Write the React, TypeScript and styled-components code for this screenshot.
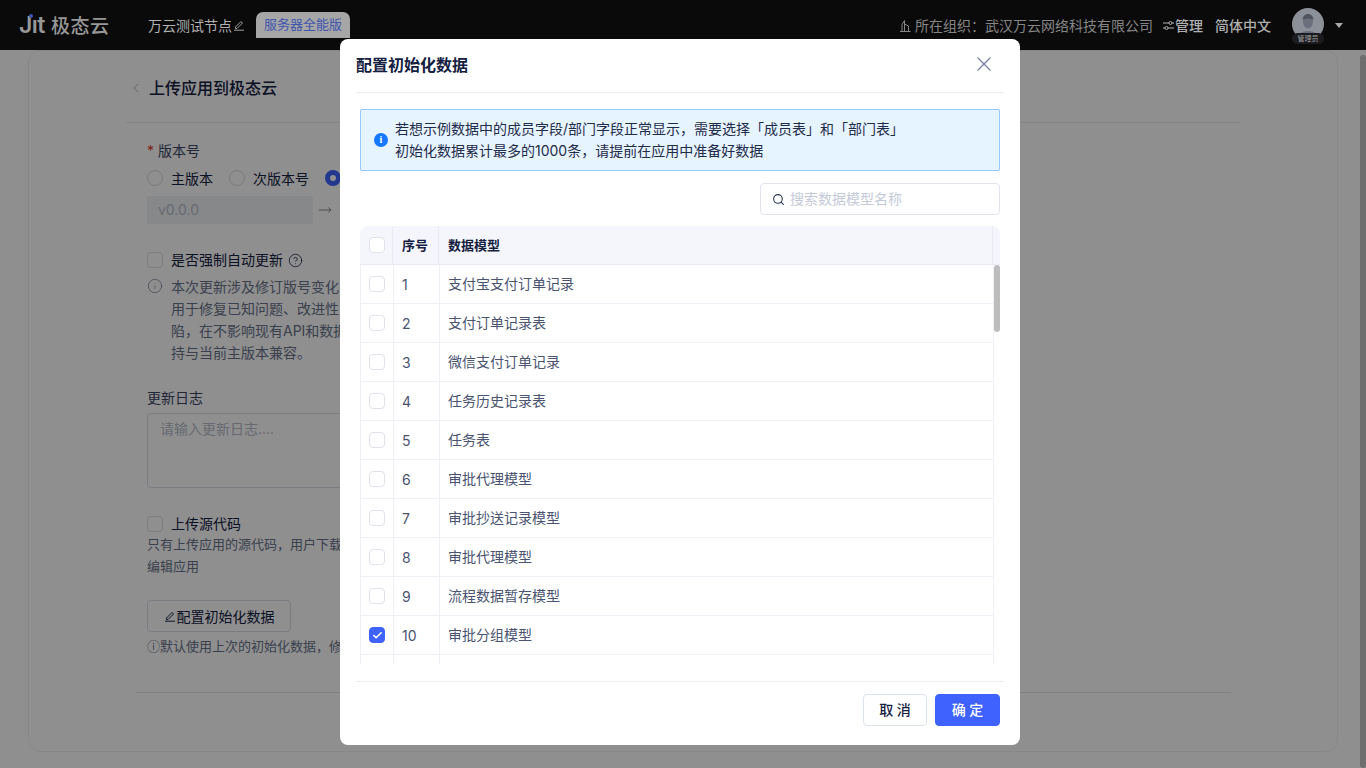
import React, {FC} from 'react';
import styled, {createGlobalStyle} from 'styled-components';
import {ChevronLeft, X, Search, Info, MoveRight, CircleHelp, Check} from 'lucide-react';

const GlobalStyle = createGlobalStyle`
  html, body {
    margin: 0;
    height: 768px;
    overflow: hidden;
    background: #fff;
    font-family: Inter, "Noto Sans CJK SC", sans-serif;
    color: #14203f;
  }
  * { box-sizing: border-box; }
`;

const rows = [
  '支付宝支付订单记录',
  '支付订单记录表',
  '微信支付订单记录',
  '任务历史记录表',
  '任务表',
  '审批代理模型',
  '审批抄送记录模型',
  '审批代理模型',
  '流程数据暂存模型',
  '审批分组模型',
];

const Page = styled.div`
  height: 768px;
  display: flex;
  flex-direction: column;
`;

// the top bar stays above the mask, its colours are already the dimmed ones
const TopBar = styled.header`
  position: relative;
  z-index: 2;
  height: 50px;
  flex: none;
  background: #0a0a0a;
  display: flex;
  align-items: center;
  padding: 0 23px 0 19px;
  color: #b0b0b0;
`;

const Logo = styled.div`
  display: flex;
  align-items: center;
  gap: 6px;
  width: 129px;
  color: #979797;
`;

const LogoMark = styled.span`
  position: relative;
  font: 600 23px/1 Inter, sans-serif;
  letter-spacing: -0.5px;
`;

const LogoDot = styled.i`
  position: absolute;
  left: 10px;
  top: 0;
  width: 4px;
  height: 4px;
  border-radius: 50%;
  background: #3f55b0;
`;

const LogoName = styled.span`
  font-size: 19px;
  font-weight: 500;
  letter-spacing: 0.5px;
  padding-bottom: 2px;
`;

const NodeName = styled.span`
  font-size: 14px;
  display: flex;
  align-items: center;
  gap: 1px;
  color: #b0b0b0;
`;

const EditionTag = styled.span`
  margin-left: 11px;
  margin-top: 0;
  height: 26px;
  padding: 0 8px;
  border-radius: 7px 7px 0 0;
  background: #a6a6a6;
  color: #3f55b0;
  font-size: 13px;
  line-height: 25px;
`;

const TopRight = styled.div`
  margin-left: auto;
  display: flex;
  align-items: center;
`;

const OrgText = styled.span`
  display: flex;
  align-items: center;
  gap: 3px;
  font-size: 14px;
  color: #858585;
`;

const ManageLink = styled.span`
  display: flex;
  align-items: center;
  gap: 1px;
  margin-left: 10px;
  font-size: 14px;
  font-weight: 500;
`;

const LangLink = styled.span`
  margin-left: 12px;
  font-size: 14px;
  font-weight: 500;
`;

const AvatarBox = styled.div`
  position: relative;
  width: 32px;
  height: 32px;
  margin: 0 0 2px 21px;
  border-radius: 50%;
  background: #8c9098;
`;

const AvatarBadge = styled.span`
  position: absolute;
  left: 0;
  bottom: -4px;
  width: 32px;
  height: 11px;
  border-radius: 6px;
  background: #1b1c20;
  color: #a0a0a0;
  font-size: 7px;
  line-height: 11px;
  text-align: center;
`;

const Caret = styled.span`
  margin-left: 11px;
  width: 0;
  height: 0;
  border: 4.5px solid transparent;
  border-top: 5px solid #a8a8a8;
  border-bottom: 0;
`;

const PageThumb = styled.div`
  position: fixed;
  z-index: 2;
  right: 0;
  top: 55px;
  bottom: 0;
  width: 6px;
  border-radius: 3px;
  background: #6e6e6e;
`;

const Body = styled.main`
  flex: 1;
  min-height: 0;
  padding: 0 28px 16px;
`;

const Sheet = styled.section`
  height: 100%;
  border: 1px solid #eef0f4;
  border-radius: 12px;
  padding: 0 97px;
`;

const Heading = styled.div`
  height: 72px;
  display: flex;
  align-items: center;
  gap: 5px;
  padding-left: 2px;
  border-bottom: 1px solid #e9ebf0;
  font-size: 16px;
  font-weight: 500;
  color: #14203f;
  svg { color: #b4bac6; margin-top: 2px; }
`;

const Form = styled.div`
  margin: 0 9px 0 10px;
  padding-left: 11px;
  height: 570px;
  border-bottom: 1px solid #e4e7ee;
  font-size: 14px;
`;

const FieldLabel = styled.div`
  padding-top: 20px;
  line-height: 16px;
  color: #3b4663;
  span { color: #e0362c; margin-right: 4px; }
`;

const RadioRow = styled.div`
  display: flex;
  gap: 16px;
  margin-top: 9px;
  height: 20px;
`;

const RadioItem = styled.label`
  display: flex;
  align-items: center;
  gap: 8px;
`;

const RadioDot = styled.i<{$on?: boolean}>`
  width: 16px;
  height: 16px;
  border-radius: 50%;
  background: #fff;
  border: ${p => (p.$on ? '5px solid #3f62ff' : '1px solid #d5d9e2')};
`;

const VersionRow = styled.div`
  display: flex;
  align-items: center;
  gap: 5px;
  margin-top: 8px;
  svg { color: #667; }
`;

const VersionInput = styled.div`
  width: 166px;
  height: 28px;
  padding: 0 11px;
  background: #f0f2f5;
  border-radius: 3px;
  color: #b8bdc9;
  line-height: 28px;
`;

const CheckRow = styled.div`
  display: flex;
  align-items: center;
  gap: 8px;
  margin-top: 26px;
  line-height: 20px;
  svg { margin-left: -3px; color: #14203f; }
`;

const Box = styled.i`
  flex: none;
  width: 16px;
  height: 16px;
  border: 1px solid #dcdfe8;
  border-radius: 4px;
  background: #fff;
`;

const NoteRow = styled.div`
  display: flex;
  gap: 8px;
  margin-top: 6px;
  width: 190px;
  color: #69728a;
  line-height: 22px;
  svg { flex: none; margin-top: 2px; }
`;

const NoteText = styled.div`
  white-space: nowrap;
`;

const LogLabel = styled.div`
  margin-top: 25px;
  line-height: 18px;
  color: #3b4663;
`;

const LogBox = styled.div`
  margin-top: 6px;
  width: 520px;
  height: 75px;
  border: 1px solid #d9dde6;
  border-radius: 4px;
  padding: 6px 12px;
  color: #b8bdc9;
  line-height: 18px;
`;

const HelpText = styled.div<{$top: number}>`
  margin-top: ${p => p.$top}px;
  font-size: 13px;
  line-height: 21.5px;
  color: #69728a;
  white-space: nowrap;
`;

const OutlineButton = styled.div`
  margin-top: 23px;
  width: 144px;
  height: 32px;
  border: 1px solid #d9dde6;
  border-radius: 4px;
  display: flex;
  align-items: center;
  justify-content: center;
  gap: 1px;
  color: #14203f;
`;

const Overlay = styled.div`
  position: fixed;
  z-index: 1;
  inset: 0;
  background: rgba(0, 0, 0, 0.44);
`;

const Modal = styled.div`
  position: fixed;
  z-index: 3;
  left: 340px;
  top: 39px;
  width: 680px;
  height: 706px;
  background: #fff;
  border-radius: 8px;
  padding: 0 16px;
  display: flex;
  flex-direction: column;
  color: #14203f;
`;

const ModalHead = styled.div`
  height: 54px;
  flex: none;
  display: flex;
  align-items: center;
  justify-content: space-between;
  border-bottom: 1px solid #eceef3;
  padding-bottom: 3px;
  font-size: 16px;
  font-weight: 700;
  svg { color: #74809b; margin-right: 8px; }
`;

const Alert = styled.div`
  margin: 16px 4px 0;
  height: 62px;
  flex: none;
  display: flex;
  align-items: center;
  gap: 7px;
  padding-left: 13px;
  background: #e6f4ff;
  border: 1px solid #91caff;
  border-radius: 2px;
  font-size: 14px;
  line-height: 22px;
  color: #1f2b4a;
`;

const AlertText = styled.div`
  padding-bottom: 1px;
`;

const InfoDot = styled.span`
  width: 14px;
  height: 14px;
  flex: none;
  border-radius: 50%;
  background: #1677ff;
  color: #fff;
  display: flex;
  align-items: center;
  justify-content: center;
  font: 700 10px/1 "Liberation Serif", serif;
`;

const SearchRow = styled.div`
  display: flex;
  justify-content: flex-end;
  margin: 12px 4px 0;
  flex: none;
`;

const SearchBox = styled.div`
  width: 240px;
  height: 32px;
  border: 1px solid #e1e4ec;
  border-radius: 4px;
  display: flex;
  align-items: center;
  gap: 5px;
  padding: 0 0 2px 11px;
  font-size: 14px;
  color: #c5cad8;
  svg { color: #2a3655; margin-top: 2px; }
`;

const Table = styled.div`
  margin: 11px 4px 0;
  width: 640px;
  flex: none;
`;

const HeadRow = styled.div`
  height: 39px;
  display: grid;
  grid-template-columns: 33px 46px 1fr 7px;
  background: #f4f6fb;
  border-radius: 8px 8px 0 0;
  border-bottom: 1px solid #e8ebf2;
  font-size: 13px;
  font-weight: 600;
`;

const HeadCell = styled.div`
  display: flex;
  align-items: center;
  padding: 0 0 1px 9px;
  border-right: 1px solid #e8ebf2;
  &:first-child { padding: 0 0 0 9px; }
  &:last-child { border-right: 0; padding: 0; }
`;

const TableBody = styled.div`
  position: relative;
  height: 399px;
  overflow: hidden;
  padding-right: 6px;
`;

const ScrollThumb = styled.div`
  position: absolute;
  top: 0;
  right: 0;
  width: 6px;
  height: 67px;
  border-radius: 3px;
  background: #bdbdbd;
`;

const Row = styled.div`
  height: 39px;
  display: grid;
  grid-template-columns: 33px 46px 1fr;
  border: 1px solid #eef0f5;
  border-top: 0;
  font-size: 14px;
  color: #4a5470;
`;

const Cell = styled.div`
  display: flex;
  align-items: center;
  padding-left: 8px;
  border-right: 1px solid #eef0f5;
  &:last-child { border-right: 0; padding-bottom: 2px; }
`;

const RowBox = styled.span<{$on?: boolean}>`
  width: 16px;
  height: 16px;
  border-radius: 4px;
  border: 1px solid ${p => (p.$on ? '#3f62ff' : '#dfe2ea')};
  background: ${p => (p.$on ? '#3f62ff' : '#fff')};
  color: #fff;
  display: flex;
  align-items: center;
  justify-content: center;
`;

const ModalFoot = styled.div`
  margin-top: 17px;
  flex: none;
  border-top: 1px solid #eceef3;
  padding: 12px 4px 0 0;
  display: flex;
  justify-content: flex-end;
  gap: 8px;
`;

const FootButton = styled.button<{$primary?: boolean}>`
  height: 32px;
  width: ${p => (p.$primary ? 65 : 64)}px;
  border-radius: 4px;
  border: 1px solid ${p => (p.$primary ? '#3f62ff' : '#dde3ee')};
  background: ${p => (p.$primary ? '#3f62ff' : '#fff')};
  color: ${p => (p.$primary ? '#fff' : '#14203f')};
  font: 500 14px Inter, "Noto Sans CJK SC", sans-serif;
  white-space: pre;
  padding: 0 0 2px;
`;

const Avatar: FC = () => (
  <svg width="32" height="32" viewBox="0 0 32 32">
    <clipPath id="avatar-clip"><circle cx="16" cy="16" r="16" /></clipPath>
    <g clipPath="url(#avatar-clip)" fill="#6b707c">
      <ellipse cx="16" cy="14" rx="5" ry="6.500" />
      <path d="M5 32c0-6 5-9 11-9s11 3 11 9z" />
      <path d="M10.500 12c0-4 3-6 5.500-6s5.500 2 5.500 6c-2-2-9-2-11 0z" fill="#4f535d" />
    </g>
  </svg>
);

const OrgIcon: FC = () => (
  <svg width="14" height="14" viewBox="0 0 14 14" fill="none" stroke="#858585" strokeWidth="1">
    <path d="M2 13.500h10.500M4 13.500V6.500L6.500 2.500V13.500M6.500 6 10.500 8v5.500" />
  </svg>
);

const ManageIcon: FC = () => (
  <svg width="11" height="11" viewBox="0 0 11 11" fill="none" stroke="#b0b0b0" strokeWidth="1">
    <path d="M0 3h6M9 3h2M0 8h2M5 8h6" />
    <circle cx="7.500" cy="3" r="1.500" />
    <circle cx="3.500" cy="8" r="1.500" />
  </svg>
);

const EditIcon: FC<{size: number; color: string}> = ({size, color}) => (
  <svg width={size} height={size} viewBox="0 0 12 12" fill="none" stroke={color} strokeWidth="1">
    <path d="M2.500 8 8 2.500l1.500 1.500L4 9.500H2.500z" />
    <path d="M1 11.200h10" />
  </svg>
);

const App: FC = () => (
  <Page>
    <GlobalStyle />
    <TopBar>
      <Logo>
        <LogoMark>Jıt<LogoDot /></LogoMark>
        <LogoName>极态云</LogoName>
      </Logo>
      <NodeName>万云测试节点<EditIcon size={12} color="#a0a0a0" /></NodeName>
      <EditionTag>服务器全能版</EditionTag>
      <TopRight>
        <OrgText><OrgIcon />所在组织：武汉万云网络科技有限公司</OrgText>
        <ManageLink><ManageIcon />管理</ManageLink>
        <LangLink>简体中文</LangLink>
        <AvatarBox>
          <Avatar />
          <AvatarBadge>管理员</AvatarBadge>
        </AvatarBox>
        <Caret />
      </TopRight>
    </TopBar>
    <PageThumb />
    <Body>
      <Sheet>
        <Heading><ChevronLeft size={16} strokeWidth={1.5} />上传应用到极态云</Heading>
        <Form>
          <FieldLabel><span>*</span>版本号</FieldLabel>
          <RadioRow>
            <RadioItem><RadioDot />主版本</RadioItem>
            <RadioItem><RadioDot />次版本号</RadioItem>
            <RadioItem><RadioDot $on />修订版本号</RadioItem>
          </RadioRow>
          <VersionRow>
            <VersionInput>v0.0.0</VersionInput>
            <MoveRight size={14} strokeWidth={1.25} />
          </VersionRow>
          <CheckRow>
            <Box />是否强制自动更新<CircleHelp size={15} strokeWidth={1.25} />
          </CheckRow>
          <NoteRow>
            <Info size={16} strokeWidth={1} />
            <NoteText>
              本次更新涉及修订版号变化<br />
              用于修复已知问题、改进性<br />
              陷，在不影响现有API和数据<br />
              持与当前主版本兼容。
            </NoteText>
          </NoteRow>
          <LogLabel>更新日志</LogLabel>
          <LogBox>请输入更新日志....</LogBox>
          <CheckRow><Box />上传源代码</CheckRow>
          <HelpText $top={0}>
            只有上传应用的源代码，用户下载后才可以<br />
            编辑应用
          </HelpText>
          <OutlineButton><EditIcon size={12} color="#14203f" />配置初始化数据</OutlineButton>
          <HelpText $top={4}>ⓘ默认使用上次的初始化数据，修改后生效</HelpText>
        </Form>
      </Sheet>
    </Body>
    <Overlay />
    <Modal>
      <ModalHead>
        配置初始化数据
        <X size={24} strokeWidth={1.25} />
      </ModalHead>
      <Alert>
        <InfoDot>i</InfoDot>
        <AlertText>
          若想示例数据中的成员字段/部门字段正常显示，需要选择「成员表」和「部门表」<br />
          初始化数据累计最多的1000条，请提前在应用中准备好数据
        </AlertText>
      </Alert>
      <SearchRow>
        <SearchBox><Search size={13} />搜索数据模型名称</SearchBox>
      </SearchRow>
      <Table>
        <HeadRow>
          <HeadCell><RowBox /></HeadCell>
          <HeadCell>序号</HeadCell>
          <HeadCell>数据模型</HeadCell>
          <HeadCell />
        </HeadRow>
        <TableBody>
          {rows.map((name, i) => (
            <Row key={i}>
              <Cell>
                <RowBox $on={i === 9}>{i === 9 && <Check size={11} strokeWidth={3.5} />}</RowBox>
              </Cell>
              <Cell>{i + 1}</Cell>
              <Cell>{name}</Cell>
            </Row>
          ))}
          <Row><Cell /><Cell /><Cell /></Row>
          <ScrollThumb />
        </TableBody>
      </Table>
      <ModalFoot>
        <FootButton>取 消</FootButton>
        <FootButton $primary>确 定</FootButton>
      </ModalFoot>
    </Modal>
  </Page>
);

export default App;
